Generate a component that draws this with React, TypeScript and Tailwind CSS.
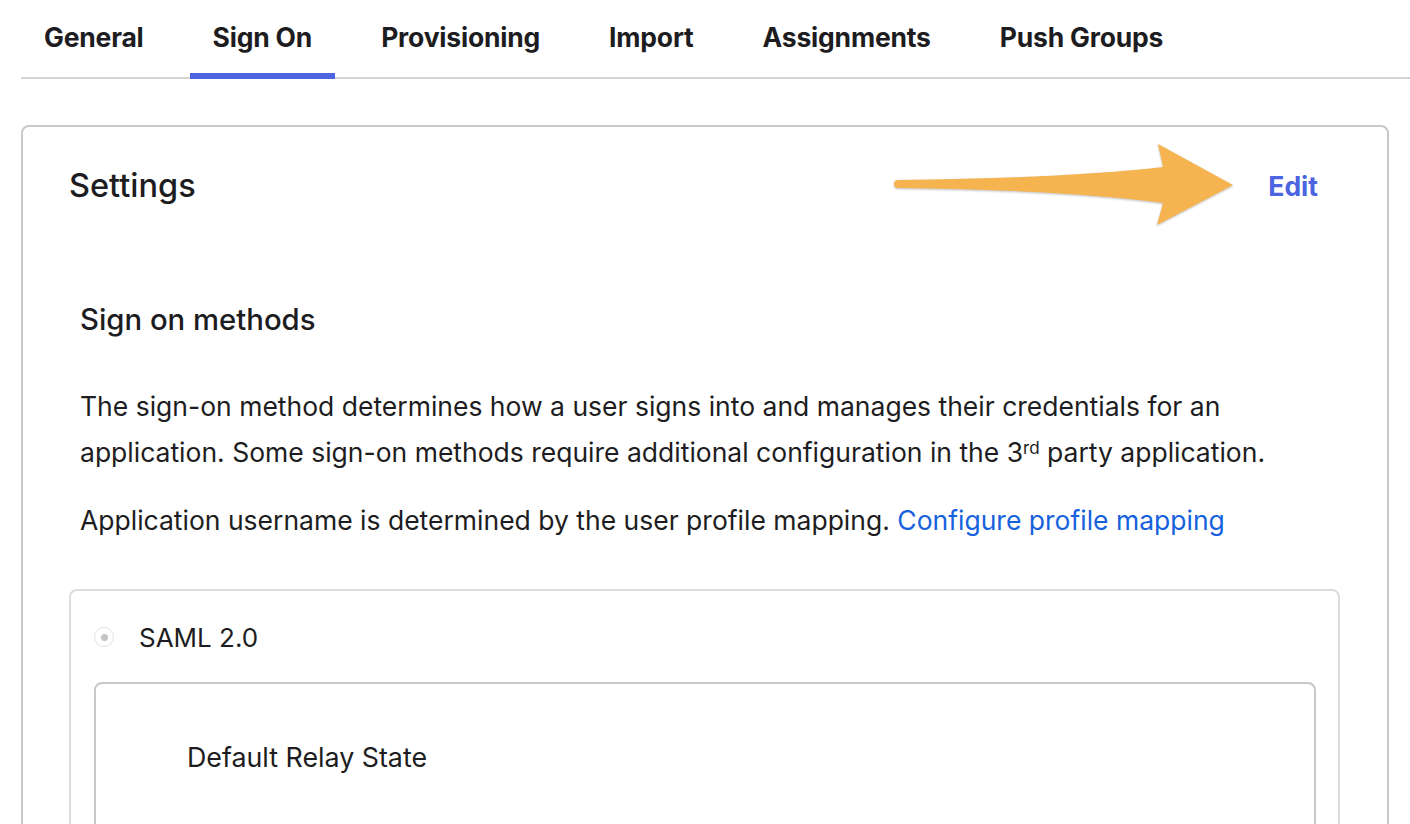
import React from 'react';

const tabs = ['General', 'Sign On', 'Provisioning', 'Import', 'Assignments', 'Push Groups'];

function Arrow() {
  return (
    <svg
      className="absolute left-[890px] top-[138px] drop-shadow-[0_1px_1px_rgba(0,0,0,0.25)]"
      width="350"
      height="95"
      viewBox="0 0 350 95"
    >
      <path
        d="M8 42 Q180 40 273 29 L268 6 L343 47 L267 87 L273 65 Q180 52 8 50 A4 4 0 0 1 8 42 Z"
        fill="#f5b44f"
      />
    </svg>
  );
}

export default function App() {
  return (
    <div
      className="relative w-[1410px] h-[824px] overflow-hidden bg-white text-[#1d1d21]"
      style={{ fontFamily: 'Inter, "Noto Sans", sans-serif' }}
    >
      <div className="ml-[21px] flex h-[79px] gap-[23px] border-b-2 border-[#d4d4d8]">
        {tabs.map((t) => {
          const active = t === 'Sign On';
          return (
            <div key={t} className="relative flex h-full items-start px-[23px] pt-[20px]">
              <span className="text-[26.5px] font-bold leading-[34px] tracking-[-0.2px]">{t}</span>
              {active && (
                <span className="absolute bottom-[-2px] left-0 right-0 h-[6px] bg-[#4c64e0]" />
              )}
            </div>
          );
        })}
      </div>

      <div className="ml-[21px] mt-[46px] w-[1368px] h-[760px] rounded-[8px] border-2 border-[#c8c8cc]">
        <div className="flex h-[118px] items-center justify-between pl-[46px] pr-[69px]">
          <h2 className="text-[32.5px] font-medium">Settings</h2>
          <a className="mt-[2px] text-[26.5px] font-bold text-[#4c64e0]">Edit</a>
        </div>

        <div className="pl-[57px]">
          <h3 className="mt-[50px] flex h-[50px] items-center text-[29.3px] font-medium">Sign on methods</h3>

          <p className="mt-[38px] w-[1240px] text-[26.5px] leading-[46px]">
            The sign-on method determines how a user signs into and manages their credentials for an
            application. Some sign-on methods require additional configuration in the 3
            <sup className="text-[17px]">rd</sup> party application.
          </p>

          <p className="mt-[22px] text-[26.5px] leading-[46px]">
            Application username is determined by the user profile mapping.{' '}
            <a className="text-[#1662dd]">Configure profile mapping</a>
          </p>
        </div>

        <div className="ml-[46px] mt-[46px] w-[1271px] h-[400px] rounded-[8px] border-2 border-[#dcdce0]">
          <div className="mt-[21px] flex h-[50px] items-center pl-[23px]">
            <span className="flex h-[20px] w-[20px] items-center justify-center rounded-full border border-[#e0e0e4] bg-white">
              <span className="h-[7px] w-[7px] rounded-full bg-[#c4c4c8]" />
            </span>
            <span className="ml-[25px] text-[26px]">SAML 2.0</span>
          </div>

          <div className="ml-[23px] mt-[20px] w-[1222px] h-[300px] rounded-[8px] border-2 border-[#c8c8cc]">
            <div className="mt-[48px] flex h-[50px] items-center pl-[91px] text-[26.8px]">
              Default Relay State
            </div>
          </div>
        </div>
      </div>

      <Arrow />
    </div>
  );
}
